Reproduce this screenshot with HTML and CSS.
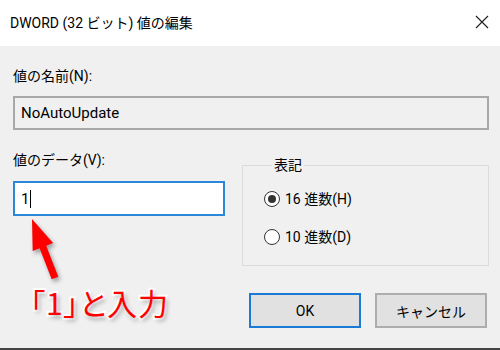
FILE: index.html
```html
<!DOCTYPE html>
<html lang="ja">
<head>
    <meta charset="UTF-8">
    <title>DWORD (32 ビット) 値の編集</title>
    <link rel="stylesheet" href="styles.css">
</head>
<body>
    <div class="window">
        <div class="titlebar">
            <span class="title">DWORD (32 ビット) 値の編集</span>
            <svg class="close" width="14" height="14" viewBox="0 0 14 14">
                <path d="M1 1 L13 13 M13 1 L1 13" stroke="#222" stroke-width="1.2" fill="none"/>
            </svg>
        </div>
        <div class="content">
            <div class="label">値の名前(N):</div>
            <div class="textbox readonly">NoAutoUpdate</div>

            <div class="row">
                <div class="col">
                    <div class="label">値のデータ(V):</div>
                    <div class="textbox focused">1<span class="caret"></span></div>
                </div>
                <fieldset class="group">
                    <legend>表記</legend>
                    <div class="radio"><span class="dot checked"></span>16 進数(H)</div>
                    <div class="radio"><span class="dot"></span>10 進数(D)</div>
                </fieldset>
            </div>

            <div class="buttons">
                <div class="btn default">OK</div>
                <div class="btn">キャンセル</div>
            </div>
        </div>

        <!-- 注釈 -->
        <svg class="arrow" width="80" height="100" viewBox="0 200 80 100">
            <polygon points="32,219 53.1,243 46.2,245.7 58.3,276.7 51.7,279.3 39.6,248.3 32.7,251" fill="#ff0000"/>
        </svg>
        <div class="note">「1」と入力</div>
    </div>
    <div class="strip"></div>
</body>
</html>
```

FILE: styles.css
```css
body{
    margin: 0;
    font-family: Roboto, "Noto Sans CJK JP", sans-serif;
    color: #000;
}
.window{
    position: relative;
    width: 500px;
    height: 348px;
    background: #f0f0f0;
    overflow: hidden;
}
.titlebar{
    height: 46px;
    background: #fff;
    display: flex;
    align-items: center;
    justify-content: space-between;
    padding: 0 11px 2px 10px;
    box-sizing: border-box;
}
.title{
    font-size: 14px;
}
.content{
    padding: 20px 11px 0 13px;
}
.label{
    font-size: 14px;
    line-height: 20px;
}
.textbox{
    margin-top: 10px;
    height: 34px;
    box-sizing: border-box;
    padding: 0 6px;
    display: flex;
    align-items: center;
    font-size: 15px;
}
.readonly{
    border: 2px solid #a8a8a8;
    background: #f0f0f0;
}
.focused{
    margin-top: 11px;
    height: 35px;
    border: 2px solid #2b88d9;
    background: #fff;
}
.caret{
    width: 1px;
    height: 18px;
    background: #000;
    margin-left: 1px;
}
.row{
    display: grid;
    grid-template-columns: 212px 1fr;
    gap: 17px;
    margin-top: 20px;
}
.group{
    margin: 5px 0 0;
    border: 1px solid #dcdcdc;
    padding: 14px 0 18px 21px;
}
.group legend{
    font-size: 14px;
    line-height: 20px;
    padding: 0 2px;
    margin-left: 8px;
}
.radio{
    display: flex;
    align-items: center;
    gap: 5px;
    font-size: 14px;
    line-height: 20px;
}
.radio + .radio{
    margin-top: 18px;
}
.dot{
    width: 14px;
    height: 14px;
    border: 1px solid #333;
    border-radius: 50%;
    background: #fff;
    display: flex;
    align-items: center;
    justify-content: center;
}
.dot.checked::after{
    content: "";
    width: 8px;
    height: 8px;
    border-radius: 50%;
    background: #333;
}
.buttons{
    display: flex;
    justify-content: flex-end;
    gap: 14px;
    margin-top: 27px;
    padding-right: 2px;
}
.btn{
    width: 112px;
    height: 35px;
    box-sizing: border-box;
    border: 2px solid #adadad;
    background: #e1e1e1;
    display: flex;
    align-items: center;
    justify-content: center;
    font-size: 14px;
}
.btn.default{
    border-color: #1a7ad6;
}
.arrow{
    position: absolute;
    left: 0;
    top: 200px;
    filter: drop-shadow(2px 3px 2px rgba(0,0,0,0.35));
}
.note{
    position: absolute;
    left: 30px;
    top: 280px;
    font-family: "Noto Sans CJK JP", sans-serif;
    font-size: 30px;
    font-weight: 400;
    line-height: 44px;
    color: #ff0000;
    font-feature-settings: "palt";
    letter-spacing: 1px;
    -webkit-text-stroke: 4px #fff;
    paint-order: stroke fill;
    text-shadow: 2px 3px 4px rgba(0,0,0,0.35);
}
.strip{
    height: 2px;
    background: #444;
}
```
